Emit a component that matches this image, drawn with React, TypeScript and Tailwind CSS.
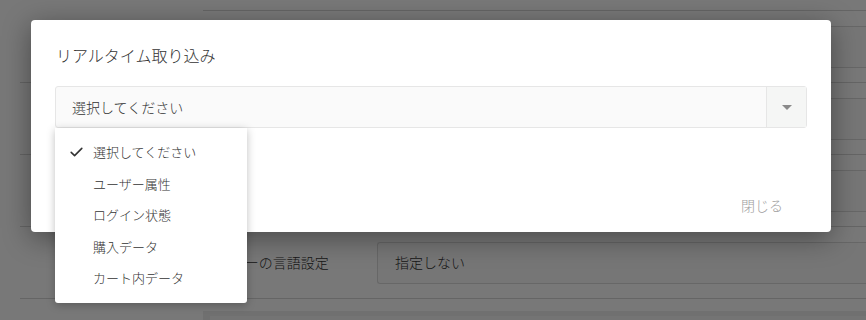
const options = ["選択してください", "ユーザー属性", "ログイン状態", "購入データ", "カート内データ"];

// rows of the settings page that sits behind the dialog
const rows = [
  { label: "", value: "" },
  { label: "", value: "" },
  { label: "", value: "" },
  { label: "ユーザーの言語設定", value: "指定しない" },
];

function Check() {
  return (
    <svg width="13" height="10" viewBox="0 0 13 10" fill="none" className="absolute left-[15px] top-1/2 -translate-y-1/2">
      <path d="M1.2 5.4 L4.6 8.6 L11.8 1.4" stroke="#333" strokeWidth="1.6" strokeLinecap="round" strokeLinejoin="round" />
    </svg>
  );
}

function SelectBox() {
  return (
    <div className="relative">
      <div className="flex h-[42px] rounded-[3px] border border-[#e6e6e6] bg-[#fafafa]">
        <div className="flex flex-1 items-center pl-4 text-[14px] text-[#333]">選択してください</div>
        <div className="flex w-[40px] items-center justify-center border-l border-[#e6e6e6] bg-[#f5f6f5]">
          <svg width="10" height="5" viewBox="0 0 10 5">
            <path d="M0 0 H10 L5 5 Z" fill="#8a8a8a" />
          </svg>
        </div>
      </div>
      <ul className="absolute left-0 top-full z-10 w-[192px] rounded-b-[3px] bg-white pt-2 pb-[9.5px] shadow-[0_2px_8px_rgba(0,0,0,0.25)]">
        {options.map((o, i) => (
          <li key={o} className="relative flex h-[31.5px] items-center pl-[38px] text-[13px] text-[#333]">
            {i === 0 && <Check />}
            {o}
          </li>
        ))}
      </ul>
    </div>
  );
}

export default function App() {
  return (
    <div
      className="relative h-[320px] w-[866px] overflow-hidden bg-white font-light"
      style={{ fontFamily: '"Noto Sans CJK JP", "Noto Sans", sans-serif' }}
    >
      {/* page behind */}
      <div className="ml-[203px] h-[11px] border-b border-[#d6d6d6]" />
      {rows.map((r, i) => (
        <div key={i} className="ml-[20px] flex h-[72px] items-center border-b border-[#d6d6d6]">
          <div className="w-[357px] pl-[183px] text-[14px] text-[#333]">{r.label}</div>
          <div className="flex h-[42px] flex-1 items-center rounded-l-[3px] border border-r-0 border-[#dcdcdc] bg-[#fafafa] pl-[17px] text-[14px] text-[#333]">
            {r.value}
          </div>
        </div>
      ))}
      <div className="ml-[203px] mt-[12px] h-[40px] bg-[#eeeeee] pl-[7px] pt-[5px]">
        <div className="h-full bg-[#f7f7f7]" />
      </div>

      {/* overlay */}
      <div className="absolute inset-0 bg-black/[0.53]" />

      {/* dialog */}
      <div className="absolute left-[31px] top-[20px] flex h-[212px] w-[800px] flex-col rounded-[4px] bg-white px-6 pt-[23px] shadow-[0_6px_28px_rgba(0,0,0,0.4)]">
        <h2 className="pl-px text-[16px] leading-6 font-light text-[#333]">リアルタイム取り込み</h2>
        <div className="mt-[19px]">
          <SelectBox />
        </div>
        <div className="mt-auto flex justify-end pb-[9px] pr-2">
          <button className="h-9 px-4 text-[14px] leading-9 text-[#9e9e9e]">閉じる</button>
        </div>
      </div>
    </div>
  );
}
